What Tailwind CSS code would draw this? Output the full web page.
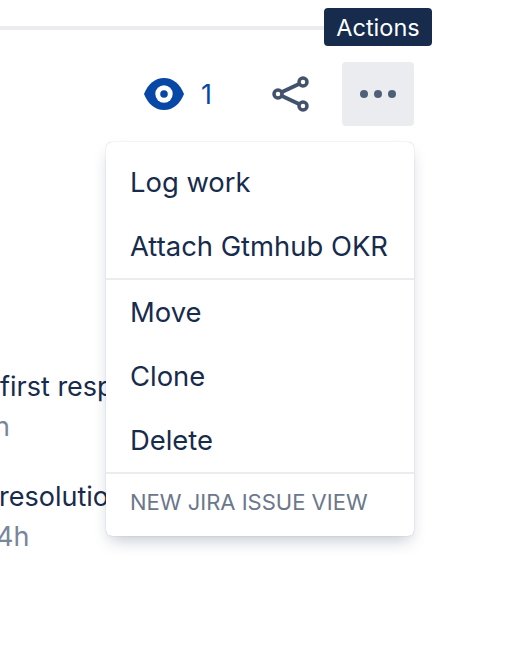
<!DOCTYPE html>
<html lang="en">
<head>
    <meta charset="UTF-8">
    <title>Actions menu</title>
    <script src="https://cdn.jsdelivr.net/npm/@tailwindcss/browser@4"></script>
</head>
<body class="bg-white font-['Inter',sans-serif] text-[#172b4d]">
    <div class="relative w-[506px] h-[648px] overflow-hidden">
        <!-- top rule -->
        <div class="pt-[26px]">
            <div class="w-[340px] h-1 bg-[#ebecf0]"></div>
        </div>

        <!-- toolbar -->
        <div class="flex items-center justify-end w-[414px] mt-8 h-16">
            <svg class="w-10 h-8 mr-[17px]" viewBox="0 0 40 32">
                <path fill="#0747a6" d="M0 16C4 6 11 0 20 0s16 6 20 16c-4 10-11 16-20 16S4 26 0 16z"/>
                <circle cx="20" cy="16" r="8.7" fill="#fff"/>
                <circle cx="20" cy="16" r="3.8" fill="#0747a6"/>
            </svg>
            <span class="text-[27px] text-[#0747a6] w-[15px] mr-14 pt-0.5">1</span>
            <svg class="w-[38px] h-[38px] mr-8" viewBox="0 0 38 38" fill="none" stroke="#42526e" stroke-width="3.5">
                <path d="M10 17 L27 9 M10 21 L27 29" stroke-width="4"/>
                <circle cx="6" cy="19" r="4"/>
                <circle cx="31" cy="7" r="4"/>
                <circle cx="31" cy="31" r="4"/>
            </svg>
            <button class="flex items-center justify-center gap-1.5 w-[72px] h-16 rounded bg-[#ebecf0]">
                <span class="w-2 h-2 rounded-full bg-[#505f79]"></span>
                <span class="w-2 h-2 rounded-full bg-[#505f79]"></span>
                <span class="w-2 h-2 rounded-full bg-[#505f79]"></span>
            </button>
        </div>

        <!-- content behind the menu -->
        <div class="mt-[241px] text-[27px] leading-10 whitespace-nowrap">
            <div>first response</div>
            <div class="text-[#7a869a] -ml-1.5">h</div>
            <div class="mt-[30px] -ml-px">resolution</div>
            <div class="text-[#7a869a] -ml-1">4h</div>
        </div>

        <!-- tooltip -->
        <div class="absolute left-[324px] top-2 w-[108px] h-[38px] pt-0.5 rounded bg-[#172b4d] text-white text-[23.5px] flex items-center justify-center">Actions</div>

        <!-- dropdown -->
        <div class="absolute left-[106px] top-[142px] w-[308px] h-[394px] rounded-md bg-white shadow-[0_8px_16px_-4px_rgba(9,30,66,0.25),0_0_1px_rgba(9,30,66,0.31)] text-[27.4px]">
            <ul class="pt-2">
                <li class="h-16 flex items-center px-6 pt-0.5">Log work</li>
                <li class="h-16 flex items-center px-6 pt-0.5">Attach Gtmhub OKR</li>
            </ul>
            <ul class="border-t-2 border-[#ebecf0]">
                <li class="h-16 flex items-center px-6 pt-0.5">Move</li>
                <li class="h-16 flex items-center px-6 pt-0.5">Clone</li>
                <li class="h-16 flex items-center px-6 pt-0.5">Delete</li>
            </ul>
            <div class="border-t-2 border-[#ebecf0] h-[62px] flex items-center px-6 pb-1 text-[22px] text-[#6b778c]">NEW JIRA ISSUE VIEW</div>
        </div>
    </div>
</body>
</html>
